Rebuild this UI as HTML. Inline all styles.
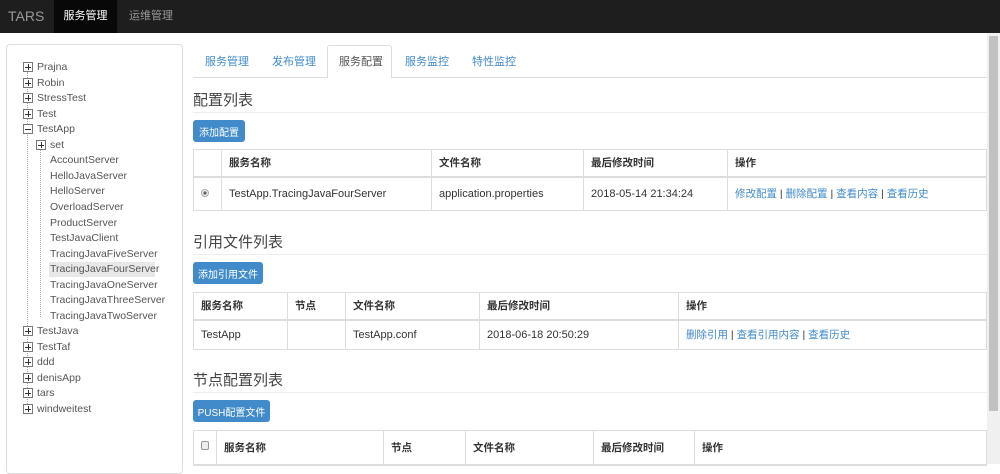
<!DOCTYPE html><html><head><meta charset="utf-8"><style>
*{box-sizing:border-box;margin:0;padding:0}
body{width:1000px;height:464px;overflow:hidden;background:#fff;font-family:"Liberation Sans","Noto Sans CJK SC",sans-serif;font-size:11px;color:#333;position:relative}
.a{position:absolute}
.nav{left:0;top:0;width:1000px;height:33px;background:#1e1e1e}
.tree div{position:absolute;font-size:10.5px;color:#555;white-space:nowrap}
.pb{position:absolute;width:10px;height:10px;border:1px solid #777;background:#fff}
.pb:before{content:"";position:absolute;left:1px;top:3.5px;width:6px;height:1px;background:#333}
.pb.p:after{content:"";position:absolute;left:3.5px;top:1px;width:1px;height:6px;background:#333}
.h{font-size:15px;color:#444}
.hr{height:1px;background:#eee}
.btn{background:#428bca;color:#fff;font-size:10px;border-radius:3px;height:22px;display:flex;align-items:center;justify-content:center}
table{position:absolute;border-collapse:collapse;font-size:11px}
td{border:1px solid #ddd;padding:0 7px}
th{border:1px solid #ddd;border-bottom:2px solid #ddd;padding:0 7px;text-align:left;font-weight:bold;font-size:10.5px}
a{color:#428bca;text-decoration:none}
.tab{position:absolute;top:53px;font-size:11px;color:#428bca}
</style></head><body>
<div class="a nav"></div>
<div class="a" style="left:8px;top:8px;color:#999;font-size:14px">TARS</div>
<div class="a" style="left:54px;top:0;width:63px;height:33px;background:#080808;color:#fff;font-size:11px;line-height:32px;text-align:center">服务管理</div>
<div class="a" style="left:129px;top:0;color:#999;font-size:11px;line-height:32px">运维管理</div>

<div class="a" style="left:6px;top:44px;width:177px;height:430px;border:1px solid #ddd;border-radius:4px"></div>
<div class="tree">
<div style="left:27px;top:72px;width:0;height:340px;border-left:1px dotted #aaa"></div>
<div style="left:40px;top:150px;width:0;height:167px;border-left:1px dotted #aaa"></div>
<div class="pb p" style="left:23px;top:62px"></div><div style="left:37px;top:61px">Prajna</div>
<div class="pb p" style="left:23px;top:78px"></div><div style="left:37px;top:77px">Robin</div>
<div class="pb p" style="left:23px;top:93px"></div><div style="left:37px;top:92px">StressTest</div>
<div class="pb p" style="left:23px;top:109px"></div><div style="left:37px;top:108px">Test</div>
<div class="pb" style="left:23px;top:124px"></div><div style="left:37px;top:123px">TestApp</div>
<div class="pb p" style="left:36px;top:140px"></div><div style="left:50px;top:139px">set</div>
<div style="left:50px;top:154px">AccountServer</div>
<div style="left:50px;top:170px">HelloJavaServer</div>
<div style="left:50px;top:185px">HelloServer</div>
<div style="left:50px;top:201px">OverloadServer</div>
<div style="left:50px;top:217px">ProductServer</div>
<div style="left:50px;top:232px">TestJavaClient</div>
<div style="left:50px;top:248px">TracingJavaFiveServer</div>
<div style="left:49px;top:262px;width:106px;height:15px;background:#e8e8e8"></div>
<div style="left:50px;top:263px">TracingJavaFourServer</div>
<div style="left:50px;top:279px">TracingJavaOneServer</div>
<div style="left:50px;top:294px">TracingJavaThreeServer</div>
<div style="left:50px;top:310px">TracingJavaTwoServer</div>
<div class="pb p" style="left:23px;top:326px"></div><div style="left:37px;top:325px">TestJava</div>
<div class="pb p" style="left:23px;top:342px"></div><div style="left:37px;top:341px">TestTaf</div>
<div class="pb p" style="left:23px;top:357px"></div><div style="left:37px;top:356px">ddd</div>
<div class="pb p" style="left:23px;top:373px"></div><div style="left:37px;top:372px">denisApp</div>
<div class="pb p" style="left:23px;top:388px"></div><div style="left:37px;top:387px">tars</div>
<div class="pb p" style="left:23px;top:404px"></div><div style="left:37px;top:403px">windweitest</div>
</div>

<div class="a" style="left:193px;top:77px;width:794px;height:1px;background:#ddd"></div>
<div class="a" style="left:327px;top:45px;width:65px;height:33px;border:1px solid #ddd;border-bottom:none;background:#fff;border-radius:3px 3px 0 0"></div>
<div class="tab" style="left:205px">服务管理</div>
<div class="tab" style="left:272px">发布管理</div>
<div class="tab" style="left:339px;color:#555">服务配置</div>
<div class="tab" style="left:405px">服务监控</div>
<div class="tab" style="left:472px">特性监控</div>

<div class="a h" style="left:193px;top:89px">配置列表</div>
<div class="a hr" style="left:193px;top:112px;width:794px"></div>
<div class="a btn" style="left:193px;top:120px;width:52px">添加配置</div>
<table style="left:193px;top:149px;width:794px">
<tr style="height:27px"><th style="width:28px"></th><th style="width:210px">服务名称</th><th style="width:152px">文件名称</th><th style="width:144px">最后修改时间</th><th>操作</th></tr>
<tr style="height:34px"><td><span style="display:inline-block;width:8px;height:8px;border-radius:50%;border:1px solid #aaa;background:radial-gradient(#666 35%,#eee 45%)"></span></td><td>TestApp.TracingJavaFourServer</td><td>application.properties</td><td>2018-05-14 21:34:24</td><td style="font-size:10.5px"><a>修改配置</a> | <a>删除配置</a> | <a>查看内容</a> | <a>查看历史</a></td></tr>
</table>

<div class="a h" style="left:193px;top:231px">引用文件列表</div>
<div class="a hr" style="left:193px;top:254px;width:794px"></div>
<div class="a btn" style="left:193px;top:262px;width:70px">添加引用文件</div>
<table style="left:193px;top:292px;width:794px">
<tr style="height:27px"><th style="width:94px">服务名称</th><th style="width:58px">节点</th><th style="width:134px">文件名称</th><th style="width:199px">最后修改时间</th><th>操作</th></tr>
<tr style="height:30px"><td>TestApp</td><td></td><td>TestApp.conf</td><td>2018-06-18 20:50:29</td><td style="font-size:10.5px"><a>删除引用</a> | <a>查看引用内容</a> | <a>查看历史</a></td></tr>
</table>

<div class="a h" style="left:193px;top:369px">节点配置列表</div>
<div class="a hr" style="left:193px;top:392px;width:794px"></div>
<div class="a btn" style="left:193px;top:400px;width:77px">PUSH配置文件</div>
<table style="left:193px;top:430px;width:794px">
<tr style="height:34px"><th style="width:23px"><span style="display:inline-block;width:8px;height:9px;border:1px solid #999;border-radius:2px;background:#eee"></span></th><th style="width:167px">服务名称</th><th style="width:82px">节点</th><th style="width:128px">文件名称</th><th style="width:101px">最后修改时间</th><th>操作</th></tr>
</table>

<div class="a" style="left:987px;top:33px;width:13px;height:431px;background:#f0f0f0"></div>
<div class="a" style="left:989px;top:36px;width:9px;height:375px;background:#c1c1c1"></div>
</body></html>
